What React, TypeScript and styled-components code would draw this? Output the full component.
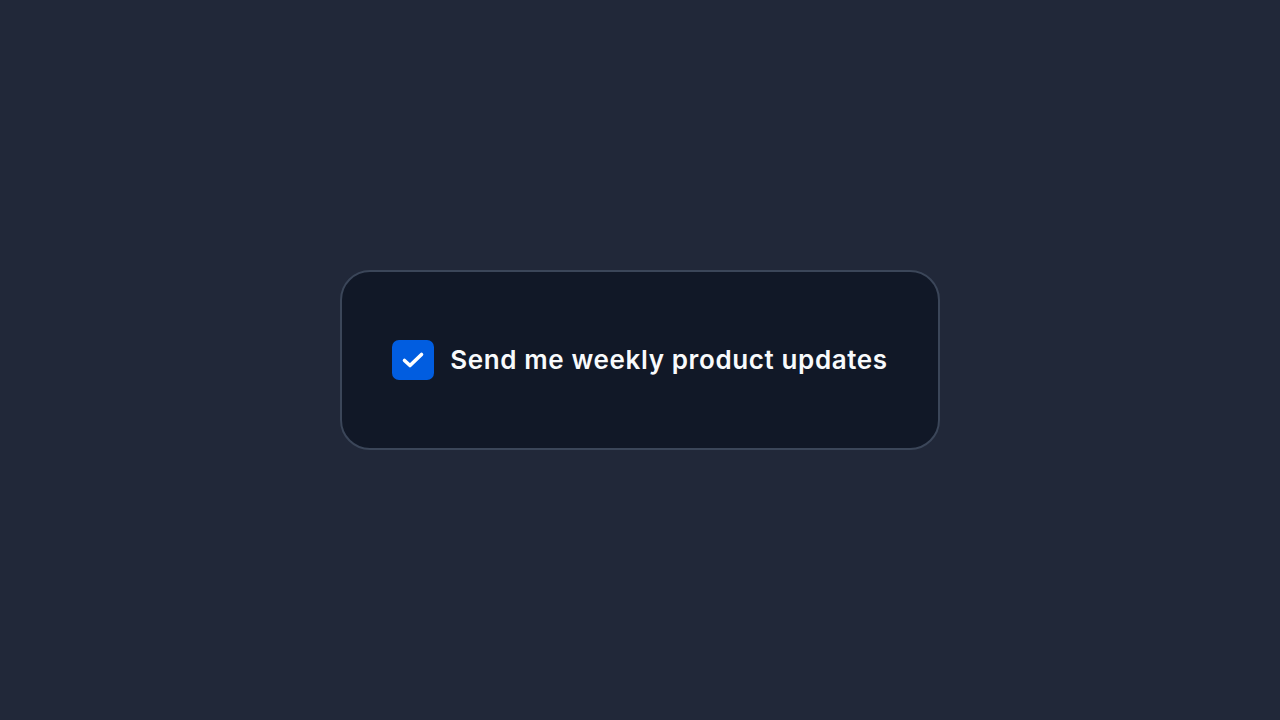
import { useState } from 'react';
import styled, { createGlobalStyle } from 'styled-components';

const GlobalStyle = createGlobalStyle`
  html, body {
    margin: 0;
    padding: 0;
    background: #212839;
  }

  #root {
    min-height: 100vh;
  }
`;

const Page = styled.main`
  min-height: 100vh;
  display: flex;
  align-items: center;
  justify-content: center;
  font-family: Inter, 'Noto Sans', sans-serif;
`;

const Card = styled.div`
  box-sizing: border-box;
  width: 600px;
  height: 180px;
  display: flex;
  align-items: center;
  justify-content: center;
  background: #111827;
  border: 2px solid #3b4659;
  border-radius: 30px;
`;

const Label = styled.label`
  display: flex;
  align-items: center;
  gap: 16px;
  cursor: pointer;
  user-select: none;
`;

const Box = styled.span<{ $checked: boolean }>`
  width: 42px;
  height: 40px;
  box-sizing: border-box;
  border-radius: 7px;
  display: flex;
  align-items: center;
  justify-content: center;
  background: ${({ $checked }) => ($checked ? '#015de0' : 'transparent')};
  border: ${({ $checked }) => ($checked ? 'none' : '2px solid #475569')};
`;

const HiddenInput = styled.input`
  position: absolute;
  opacity: 0;
  width: 0;
  height: 0;
`;

const Text = styled.span`
  color: #f8fafc;
  font-size: 26px;
  font-weight: 580;
  letter-spacing: 0.62px;
  line-height: 1;
`;

export default function App() {
  const [checked, setChecked] = useState(true);

  return (
    <>
      <GlobalStyle />
      <Page>
        <Card>
          <Label>
            <HiddenInput
              type="checkbox"
              checked={checked}
              onChange={(e) => setChecked(e.target.checked)}
            />
            <Box $checked={checked}>
              {checked && (
                <svg width="28" height="28" viewBox="0 0 28 28" fill="none">
                  <path
                    d="M5.5 14.5L11 19.5L22.5 8.5"
                    stroke="#fff"
                    strokeWidth="3.6"
                    strokeLinecap="round"
                    strokeLinejoin="round"
                  />
                </svg>
              )}
            </Box>
            <Text>Send me weekly product updates</Text>
          </Label>
        </Card>
      </Page>
    </>
  );
}
